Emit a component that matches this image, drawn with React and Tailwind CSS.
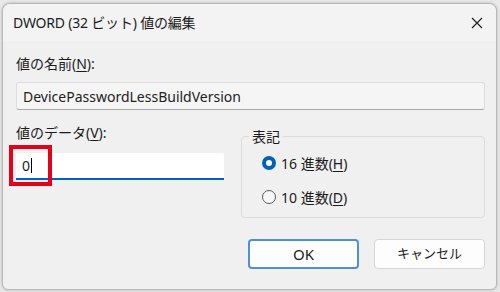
import React from "react";

const font = { fontFamily: '"Noto Sans", "Noto Sans CJK JP", sans-serif' };

function U({ children }) {
  return <span className="underline underline-offset-2">{children}</span>;
}

export default function App() {
  return (
    <div
      className="w-[500px] h-[292px] overflow-hidden bg-[#e9e9e9] pt-[3px] pl-[2px] text-[#1b1b1b]"
      style={font}
    >
      <div className="w-[495px] h-[287px] rounded-t-[8px] rounded-b-[6px] border border-[#b9b9b9] bg-[#f0f0f0] flex flex-col overflow-hidden shadow-[0_0_3px_rgba(0,0,0,0.25)]">
        {/* title bar */}
        <div className="h-[37px] bg-[#f3f3f3] flex items-center justify-between pl-[10px] pr-[12px]">
          <span className="text-[14px] leading-none tracking-[-0.2px]">DWORD (32 ビット) 値の編集</span>
          <svg width="12" height="12" viewBox="0 0 12 12" className="mr-[1px]">
            <path d="M1 1 L11 11 M11 1 L1 11" stroke="#222" strokeWidth="1.2" fill="none" />
          </svg>
        </div>
        {/* body */}
        <div className="flex flex-col pl-[13px] pr-[11px] pt-[13px]">
          <div className="text-[14px] leading-[20px] h-[20px]">
            値の名前(<U>N</U>):
          </div>
          <div className="mt-[8px] h-[28px] rounded-[3px] border border-[#dedede] border-b-[#a8a8a8] bg-[#f5f5f5] flex items-center pl-[6px] text-[14px] text-[#222]">
            DevicePasswordLessBuildVersion
          </div>
          <div className="flex mt-[13px]">
            <div className="w-[208px] flex flex-col">
              <div className="text-[14px] leading-[20px] h-[20px]">
                値のデータ(<U>V</U>):
              </div>
              <div className="relative mt-[10px] h-[27px] bg-white border-b-2 border-[#0063b8] rounded-t-[3px] flex items-center pl-[6px] text-[14px]">
                <span>0</span>
                <span className="w-px h-[15px] bg-black ml-[1px]"></span>
                <div className="absolute left-[-7px] top-[-8px] w-[43px] h-[41px] border-[4px] border-[#e6001a]"></div>
              </div>
            </div>
            <div className="ml-[17px] flex-1 relative">
              <div className="mt-[13px] h-[82px] rounded-[4px] border border-[#dcdcdc] flex flex-col pl-[20px] pt-[16px] text-[14px]">
                <div className="flex items-center h-[20px]">
                  <span className="w-[14px] h-[14px] rounded-full bg-[#0063b8] flex items-center justify-center">
                    <span className="w-[6px] h-[6px] rounded-full bg-white"></span>
                  </span>
                  <span className="ml-[5px]">16 進数(<U>H</U>)</span>
                </div>
                <div className="flex items-center h-[20px] mt-[14px]">
                  <span className="w-[14px] h-[14px] rounded-full border border-[#5a5a5a] bg-[#f7f7f7]"></span>
                  <span className="ml-[5px]">10 進数(<U>D</U>)</span>
                </div>
              </div>
              <div className="absolute left-[8px] top-[4px] px-[3px] bg-[#f0f0f0] text-[14px] leading-[20px]">表記</div>
            </div>
          </div>
          <div className="flex justify-end gap-[15px] mt-[21px]">
            <div className="w-[111px] h-[30px] rounded-[4px] border-2 border-[#4f8fd6] bg-[#fdfdfd] flex items-center justify-center text-[15px]">
              OK
            </div>
            <div className="w-[111px] h-[30px] rounded-[4px] border border-[#d6d6d6] bg-[#fdfdfd] flex items-center justify-center text-[13px]">
              キャンセル
            </div>
          </div>
        </div>
      </div>
    </div>
  );
}
